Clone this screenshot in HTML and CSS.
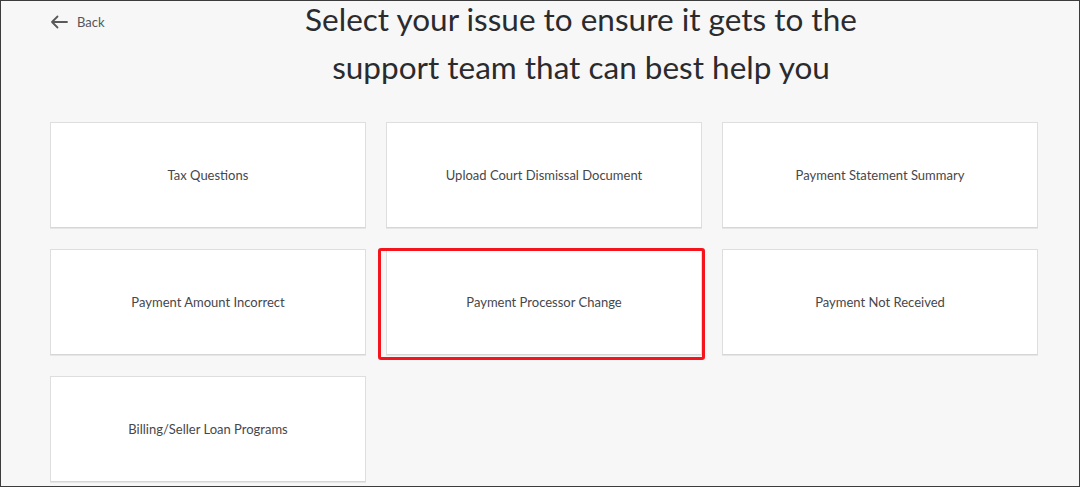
FILE: index.html
```html
<!DOCTYPE html>
<html lang="en">
<head>
<meta charset="utf-8">
<title>Select your issue</title>
<link rel="stylesheet" href="styles.css">
</head>
<body>
<div class="frame">
  <header class="header">
    <a class="back" href="#">
      <svg class="back-icon" width="18" height="14" viewBox="0 0 18 14" aria-hidden="true">
        <path d="M17 7H2M7.5 1.5L2 7l5.5 5.5" fill="none" stroke="#5a5a5a" stroke-width="1.8" stroke-linecap="round" stroke-linejoin="round"/>
      </svg>
      <span>Back</span>
    </a>
    <h1 class="title">Select your issue to ensure it gets to the<br>support team that can best help you</h1>
  </header>
  <main class="grid">
    <button class="card">Tax Questions</button>
    <button class="card">Upload Court Dismissal Document</button>
    <button class="card">Payment Statement Summary</button>
    <button class="card">Payment Amount Incorrect</button>
    <button class="card card-marked">Payment Processor Change<span class="mark"></span></button>
    <button class="card">Payment Not Received</button>
    <button class="card">Billing/Seller Loan Programs</button>
  </main>
</div>
</body>
</html>
```

FILE: styles.css
```css
* { box-sizing: border-box; }
html, body { margin: 0; padding: 0; }
body {
  background: #f7f7f7;
  font-family: Lato, "Open Sans", sans-serif;
  color: #2e2f32;
  overflow: hidden;
}
.frame {
  width: 1080px;
  height: 487px;
  border: 1px solid #3c3c3c;
  padding: 0 41px 0 49px;
  overflow: hidden;
}
.header {
  display: flex;
  align-items: flex-start;
  height: 121px;
}
.back {
  display: flex;
  align-items: center;
  gap: 9px;
  width: 96px;
  padding-top: 13px;
  color: #555659;
  text-decoration: none;
  font-size: 13px;
}
.back-icon { display: block; }
.title {
  flex: 1;
  margin: -5px 0 0;
  padding-right: 22px;
  text-align: center;
  font-weight: 400;
  font-size: 31.5px;
  line-height: 47.5px;
  color: #2a2b2e;
}
.grid {
  display: grid;
  grid-template-columns: repeat(3, 316px);
  grid-auto-rows: 106px;
  column-gap: 20px;
  row-gap: 21px;
}
.card {
  position: relative;
  display: flex;
  align-items: center;
  justify-content: center;
  background: #fff;
  border: 1px solid #dedede;
  border-bottom-color: #d6d6d6;
  box-shadow: 0 1px 0 #e6e6e6;
  font-family: inherit;
  font-size: 13px;
  color: #46474a;
  padding: 0;
  cursor: pointer;
}
.mark {
  position: absolute;
  left: -9px;
  top: -2px;
  right: -4px;
  bottom: -6px;
  border: 3px solid #f5141b;
  border-radius: 3px;
  pointer-events: none;
}
```
